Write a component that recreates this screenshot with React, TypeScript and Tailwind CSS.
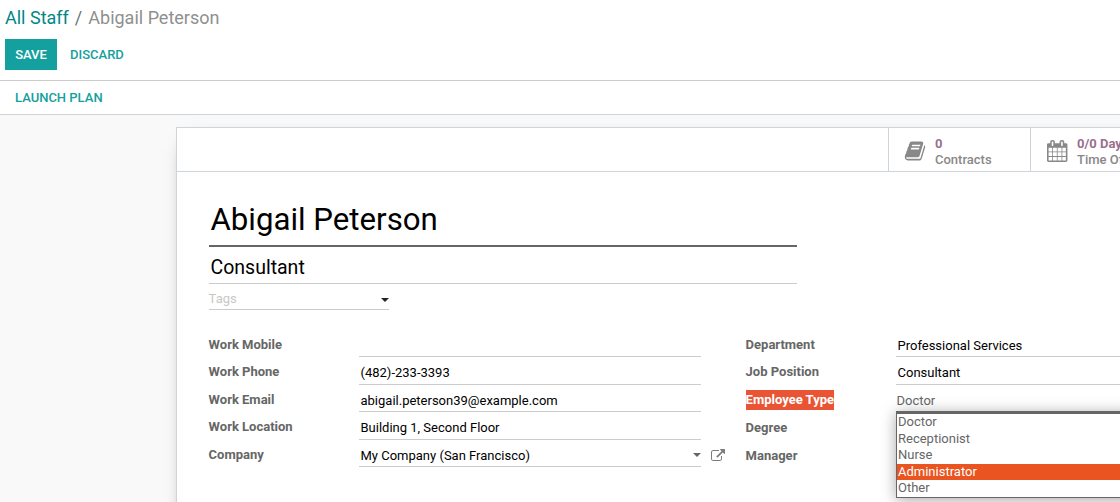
import type { ReactNode } from 'react';

const BOOK =
  'M1703 478q40 57 18 129l-275 906q-19 64-76.5 107.5t-122.5 43.5h-923q-77 0-148.5-53.5t-99.5-131.5q-24-67-2-127 0-4 3-27t4-37q1-8-3-21.5t-3-19.5q2-11 8-21t16.5-23.5 16.5-23.5q23-38 45-91.5t30-91.5q3-10 .5-30t-.5-28q3-11 17-28t17-23q21-36 42-92t25-90q1-9-2.5-32t.5-28q4-13 22-30.5t22-22.5q19-26 42.5-84.5t27.5-96.5q1-8-3-25.5t-2-26.5q2-8 9-18t18-23 17-21q8-12 16.5-30.5t15-35 16-36 19.5-32 26.5-23.5 36-11.5 47.5 5.5l-1 3q38-9 51-9h761q74 0 114 56t18 130l-274 906q-36 119-71.5 153.5t-128.5 34.5h-869q-27 0-38 15-11 16-1 43 24 70 144 70h923q29 0 56-15.5t35-41.5l300-987q7-22 5-57 38 15 59 43zm-1064 2q-4 13 2 22.5t20 9.5h608q13 0 25.5-9.5t16.5-22.5l21-64q4-13-2-22.5t-20-9.5h-608q-13 0-25.5 9.5t-16.5 22.5zm-83 256q-4 13 2 22.5t20 9.5h608q13 0 25.5-9.5t16.5-22.5l21-64q4-13-2-22.5t-20-9.5h-608q-13 0-25.5 9.5t-16.5 22.5z';

const CALENDAR =
  'M192 1664h288v-288h-288v288zm352 0h320v-288h-320v288zm-352-352h288v-320h-288v320zm352 0h320v-320h-320v320zm-352-384h288v-288h-288v288zm736 736h320v-288h-320v288zm-384-736h320v-288h-320v288zm768 736h288v-288h-288v288zm-384-352h320v-320h-320v320zm-352-864v-288q0-13-9.5-22.5t-22.5-9.5h-64q-13 0-22.5 9.5t-9.5 22.5v288q0 13 9.5 22.5t22.5 9.5h64q13 0 22.5-9.5t9.5-22.5zm736 864h288v-320h-288v320zm-384-384h320v-288h-320v288zm384 0h288v-288h-288v288zm32-480v-288q0-13-9.5-22.5t-22.5-9.5h-64q-13 0-22.5 9.5t-9.5 22.5v288q0 13 9.5 22.5t22.5 9.5h64q13 0 22.5-9.5t9.5-22.5zm384-64v1280q0 52-38 90t-90 38h-1408q-52 0-90-38t-38-90v-1280q0-52 38-90t90-38h128v-96q0-66 47-113t113-47h64q66 0 113 47t47 113v96h384v-96q0-66 47-113t113-47h64q66 0 113 47t47 113v96h128q52 0 90 38t38 90z';

const EXTERNAL_LINK =
  'M1408 928v320q0 119-84.5 203.5t-203.5 84.5h-832q-119 0-203.5-84.5t-84.5-203.5v-832q0-119 84.5-203.5t203.5-84.5h704q14 0 23 9t9 23v64q0 14-9 23t-23 9h-704q-66 0-113 47t-47 113v832q0 66 47 113t113 47h832q66 0 113-47t47-113v-320q0-14 9-23t23-9h64q14 0 23 9t9 23zm384-864v512q0 26-19 45t-45 19-45-19l-176-176-652 652q-10 10-23 10t-23-10l-114-114q-10-10-10-23t10-23l652-652-176-176q-19-19-19-45t19-45 45-19h512q26 0 45 19t19 45z';

function Icon({ path, className, viewBox = '0 0 1792 1792' }: { path: string; className: string; viewBox?: string }) {
  return (
    <svg viewBox={viewBox} fill="currentColor" className={className} aria-hidden="true">
      <path d={path} />
    </svg>
  );
}

function Caret({ className }: { className: string }) {
  return (
    <svg viewBox="0 0 8 4" fill="currentColor" className={`h-1 w-2 shrink-0 ${className}`} aria-hidden="true">
      <path d="M0 0h8L4 4z" />
    </svg>
  );
}

type StatProps = { path: string; value: string; label: string; viewBox?: string };

function StatButton({ path, value, label, viewBox }: StatProps) {
  return (
    <button className="flex h-[43px] w-[142px] shrink-0 items-start border-l border-[#ced4da] pl-[15px] text-left">
      <Icon path={path} viewBox={viewBox} className="mt-3 h-[22px] w-[22px] shrink-0 text-[#888888]" />
      <span className="flex flex-col pt-2 pl-[9px] leading-4 font-medium whitespace-nowrap">
        <span className="font-bold text-[#9a6f8e]">{value}</span>
        <span className="text-[#888888]">{label}</span>
      </span>
    </button>
  );
}

function Label({ children, marked = false }: { children: ReactNode; marked?: boolean }) {
  return (
    <div className="-ml-[0.4px] flex w-[150.4px] shrink-0 pt-[5px] font-bold text-[#666666]">
      <span className={marked ? 'h-5 bg-[#e95434] leading-5 text-white' : 'h-5 leading-5'}>{children}</span>
    </div>
  );
}

type FieldRow = { label: string; value: string; height: string };

const workFields: FieldRow[] = [
  { label: 'Work Mobile', value: '', height: 'h-[27px]' },
  { label: 'Work Phone', value: '(482)-233-3393', height: 'h-7' },
  { label: 'Work Email', value: 'abigail.peterson39@example.com', height: 'h-[27px]' },
  { label: 'Work Location', value: 'Building 1, Second Floor', height: 'h-7' },
];

const options = ['Doctor', 'Receptionist', 'Nurse', 'Administrator', 'Other'];

function Field({ row }: { row: FieldRow }) {
  return (
    <div className={`flex ${row.height}`}>
      <Label>{row.label}</Label>
      <div className="flex-1 border-b border-[#cccccc] pt-1.5 pl-[1.5px] leading-5 text-black">{row.value}</div>
    </div>
  );
}

export default function App() {
  return (
    <div className="h-[502px] w-full overflow-hidden bg-[#f9f9f9] font-['Roboto',sans-serif] text-[13px] text-[#666666]">
      <header className="h-[81px] border-b border-[#cccccc] bg-white pl-[5px]">
        <nav className="flex h-[39px] gap-1.5 pt-1.5 text-[18px] leading-6">
          <a className="text-[#008784]">All Staff</a>
          <span className="text-[#6c757d]">/</span>
          <span className="text-[#8f8f8f]">Abigail Peterson</span>
        </nav>
        <div className="flex h-[31px] font-medium">
          <button className="w-[52px] bg-[#14a09e] text-white">SAVE</button>
          <button className="pl-[13px] text-[#14a09e]">DISCARD</button>
        </div>
      </header>
      <div className="flex h-[34px] items-center border-b border-[#ced4da] bg-white pl-[15px]">
        <button className="font-medium text-[#14a09e]">LAUNCH PLAN</button>
      </div>

      <main className="pt-3 pl-44">
        <section className="h-[500px] w-[1140px] border border-[#ced4da] bg-white shadow-[0_5px_20px_-15px_#000000]">
          <div className="flex h-11 border-b border-[#ced4da] pl-[711px]">
            <StatButton path={BOOK} value="0" label="Contracts" />
            <StatButton path={CALENDAR} viewBox="-18 0 1792 1792" value="0/0 Days" label="Time Off" />
          </div>

          <div className="pl-8">
            <div className="flex h-[75px] w-[588px] items-start border-b-2 border-[#666666] pt-[27px] pl-[1.5px]">
              <h1 className="text-[31.2px] leading-[42px] text-black">Abigail Peterson</h1>
            </div>
            <div className="h-[37px] w-[588px] border-b border-[#cccccc] pt-2 pl-[1.5px] text-[19.5px] leading-[26px] text-black">
              Consultant
            </div>
            <div className="flex h-[26px] w-[180px] justify-between border-b border-[#cccccc] text-[#c8c8c8]">
              <span className="-ml-[0.4px] pt-[5px] leading-5">Tags</span>
              <Caret className="mt-3.5 text-[#212529]" />
            </div>

            <div className="flex pt-5">
              <div className="w-[537px] shrink-0">
                <div className="w-[492px]">
                  {workFields.map((row) => (
                    <Field key={row.label} row={row} />
                  ))}
                </div>
                <div className="flex h-[27px]">
                  <Label>Company</Label>
                  <div className="flex w-[342px] justify-between border-b border-[#cccccc] pt-1.5 pl-[1.5px] leading-5 text-black">
                    <span>My Company (San Francisco)</span>
                    <Caret className="mt-[7px] text-[#666666]" />
                  </div>
                  <Icon path={EXTERNAL_LINK} className="mt-[9px] ml-2.5 h-[14px] w-[14px] text-[#7c7c7c]" />
                </div>
              </div>

              <div className="w-[520px] shrink-0">
                <Field row={{ label: 'Department', value: 'Professional Services', height: 'h-[27px]' }} />
                <Field row={{ label: 'Job Position', value: 'Consultant', height: 'h-7' }} />
                <div className="flex h-7">
                  <Label marked>Employee Type</Label>
                  <div className="relative flex-1 pt-1.5 pl-[0.5px] leading-5">
                    Doctor
                    <div className="absolute top-[26px] left-0 h-[87px] w-full border border-t-[3px] border-[#666666] bg-white shadow-[0_2px_14px_rgba(0,0,0,0.35)]">
                      <ul>
                        {options.map((option) => (
                          <li
                            key={option}
                            className={
                              option === 'Administrator'
                                ? 'h-[16.5px] bg-[#e95420] pl-px leading-[16.5px] text-white'
                                : 'h-[16.5px] pl-px leading-[16.5px]'
                            }
                          >
                            {option}
                          </li>
                        ))}
                      </ul>
                    </div>
                  </div>
                </div>
                <div className="flex h-7">
                  <Label>Degree</Label>
                </div>
                <div className="flex h-7">
                  <Label>Manager</Label>
                </div>
              </div>
            </div>
          </div>
        </section>
      </main>
    </div>
  );
}
